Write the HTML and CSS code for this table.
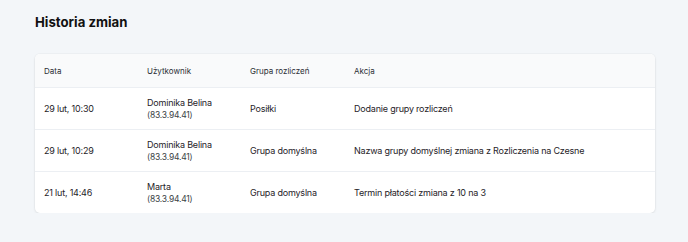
FILE: index.html
```html
<!DOCTYPE html>
<html lang="pl">
<head>
    <meta charset="UTF-8">
    <meta name="viewport" content="width=device-width, initial-scale=1.0">
    <title>Historia zmian</title>
    <link rel="stylesheet" href="styles.css">
</head>
<body>
    <main class="page">
        <h1 class="page-title">Historia zmian</h1>
        <div class="card">
            <table class="history">
                <colgroup>
                    <col class="col-date">
                    <col class="col-user">
                    <col class="col-group">
                    <col>
                </colgroup>
                <thead>
                    <tr>
                        <th>Data</th>
                        <th>Użytkownik</th>
                        <th>Grupa rozliczeń</th>
                        <th>Akcja</th>
                    </tr>
                </thead>
                <tbody>
                    <tr>
                        <td>29 lut, 10:30</td>
                        <td><div class="user">Dominika Belina</div><div class="ip">(83.3.94.41)</div></td>
                        <td>Posiłki</td>
                        <td>Dodanie grupy rozliczeń</td>
                    </tr>
                    <tr>
                        <td>29 lut, 10:29</td>
                        <td><div class="user">Dominika Belina</div><div class="ip">(83.3.94.41)</div></td>
                        <td>Grupa domyślna</td>
                        <td>Nazwa grupy domyślnej zmiana z Rozliczenia na Czesne</td>
                    </tr>
                    <tr>
                        <td>21 lut, 14:46</td>
                        <td><div class="user">Marta</div><div class="ip">(83.3.94.41)</div></td>
                        <td>Grupa domyślna</td>
                        <td>Termin płatości zmiana z 10 na 3</td>
                    </tr>
                </tbody>
            </table>
        </div>
    </main>
</body>
</html>
```

FILE: styles.css
```css
body {
    font-family: Inter, "Noto Sans", sans-serif;
    background-color: #f3f6f9;
    color: #1f2328;
    margin: 0;
    padding: 0;
}
.page {
    padding: 13px 33px 0 35px;
}
.page-title {
    margin: 0 0 23px;
    font-size: 13.2px;
    line-height: 18px;
    font-weight: 700;
    color: #111;
}
.card {
    background-color: #fff;
    border-radius: 5px;
    box-shadow: 0 1px 3px rgba(0, 0, 0, 0.08), 0 0 0 1px rgba(0, 0, 0, 0.02);
    overflow: hidden;
}
.history {
    width: 100%;
    border-collapse: collapse;
    table-layout: fixed;
}
.col-date, .col-user {
    width: 103px;
}
.col-group {
    width: 104px;
}
.history th {
    background-color: #f9fafb;
    height: 33px;
    padding: 0 9px;
    font-size: 8px;
    font-weight: 400;
    text-align: left;
    color: #2b2f35;
    border-bottom: 1px solid #eceff3;
}
.history td {
    height: 41px;
    padding: 0 9px;
    font-size: 9px;
    line-height: 13px;
    letter-spacing: -0.2px;
    text-align: left;
    vertical-align: middle;
    color: #1f2328;
    border-bottom: 1px solid #eceff3;
}
.history tbody tr:last-child td {
    border-bottom: none;
}
.ip {
    font-size: 8.5px;
    color: #3a3f45;
}
```
